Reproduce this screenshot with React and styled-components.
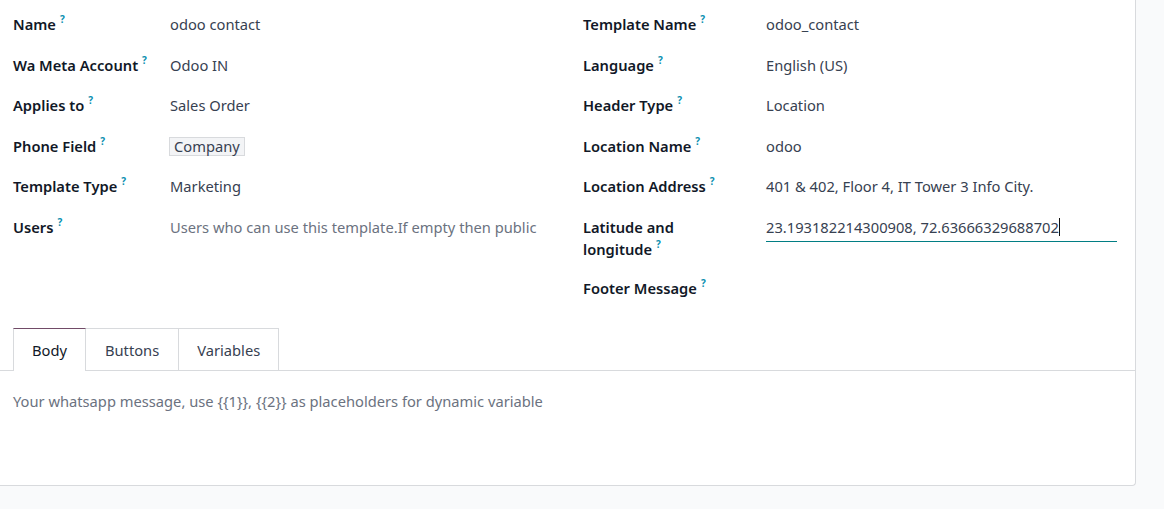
import React from 'react'
import styled, { createGlobalStyle } from 'styled-components'

const GlobalStyle = createGlobalStyle`
    html, body {
        margin:0;
        padding:0;
        background-color:#f9fafb;
        font-family:"Noto Sans", "Open Sans", sans-serif;
        font-size:14.7px;
    }
`

const Page = styled.div`
    width:1164px;
    height:509px;
    background-color:#f9fafb;
`

const Sheet = styled.div`
    width:1135px;
    height:485px;
    background-color:#fff;
    border-right:1px solid #d8dadd;
    border-bottom:1px solid #d8dadd;
    border-bottom-right-radius:4px;
    display:flex;
    flex-direction:column;
`

const Groups = styled.div`
    display:grid;
    grid-template-columns:570px 1fr;
    padding:13px 18px 0 13px;
`

const Group = styled.div`
    display:grid;
    grid-template-columns:${({labelWidth}) => labelWidth}px 1fr;
    align-content:start;
`

const Label = styled.div`
    font-weight:600;
    color:#111827;
    line-height:22px;
    margin-bottom:${({tight}) => tight ? '16.6px' : '18.6px'};
    padding-right:8px;
`

const Help = styled.sup`
    color:#0a8fb0;
    font-size:10px;
    font-weight:700;
    margin-left:4px;
    vertical-align:top;
    position:relative;
    top:-5px;
`

const Value = styled.div`
    color:#374151;
    line-height:22px;
    margin-bottom:${({tight}) => tight ? '16.6px' : '18.6px'};
`

const Badge = styled.span`
    display:inline-block;
    line-height:17px;
    padding:0 4px;
    background-color:#f3f4f6;
    border:1px solid #d8dadd;
    margin-left:-1px;
`

const Placeholder = styled.span`
    color:#6b7280;
`

const InputLine = styled.div`
    border-bottom:1px solid #017e84;
    width:351px;
    height:25px;
    display:flex;
    align-items:flex-start;
    color:#374151;
`

const Caret = styled.span`
    display:inline-block;
    width:1px;
    height:18px;
    margin-top:2px;
    background-color:#111;
`

const TabBar = styled.div`
    display:flex;
    margin-top:11px;
    padding-left:13px;
    border-bottom:1px solid #d8dadd;
`

const Tab = styled.div`
    padding:0 ${({pad}) => pad}px;
    display:flex;
    align-items:center;
    color:${({active}) => active ? '#111827' : '#374151'};
    background-color:#fff;
    border:1px solid #d8dadd;
    border-left:${({first}) => first ? '1px solid #d8dadd' : 'none'};
    border-top:1px solid ${({active}) => active ? '#714b67' : '#d8dadd'};
    border-bottom:none;
    margin-bottom:${({active}) => active ? '-1px' : '0'};
    height:${({active}) => active ? '42px' : '41px'};
`

const TabBody = styled.div`
    padding:19px 13px;
    line-height:22px;
    color:#6b7280;
`

const leftRows = [
    { label: 'Name', value: 'odoo contact' },
    { label: 'Wa Meta Account', value: 'Odoo IN' },
    { label: 'Applies to', value: 'Sales Order' },
    { label: 'Phone Field', value: <Badge>Company</Badge> },
    { label: 'Template Type', value: 'Marketing' },
    { label: 'Users', value: <Placeholder>Users who can use this template.If empty then public</Placeholder> },
]

const rightRows = [
    { label: 'Template Name', value: 'odoo_contact' },
    { label: 'Language', value: 'English (US)' },
    { label: 'Header Type', value: 'Location' },
    { label: 'Location Name', value: 'odoo' },
    { label: 'Location Address', value: '401 & 402, Floor 4, IT Tower 3 Info City.' },
    {
        label: <>Latitude and<br />longitude</>,
        value: <InputLine>23.193182214300908, 72.63666329688702<Caret /></InputLine>,
        tight: true,
    },
    { label: 'Footer Message', value: '' },
]

const Rows = ({rows}) => rows.map((r, i) => (
    <React.Fragment key={i}>
        <Label tight={r.tight}>{r.label}<Help>?</Help></Label>
        <Value tight={r.tight}>{r.value}</Value>
    </React.Fragment>
))

const App = () => {
    return (
        <Page>
            <GlobalStyle />
            <Sheet>
                <Groups>
                    <Group labelWidth={157}>
                        <Rows rows={leftRows} />
                    </Group>
                    <Group labelWidth={183}>
                        <Rows rows={rightRows} />
                    </Group>
                </Groups>
                <TabBar>
                    <Tab first active pad={18}>Body</Tab>
                    <Tab pad={19}>Buttons</Tab>
                    <Tab pad={18}>Variables</Tab>
                </TabBar>
                <TabBody>Your whatsapp message, use {'{{1}}'}, {'{{2}}'} as placeholders for dynamic variable</TabBody>
            </Sheet>
        </Page>
    )
}

export default App
